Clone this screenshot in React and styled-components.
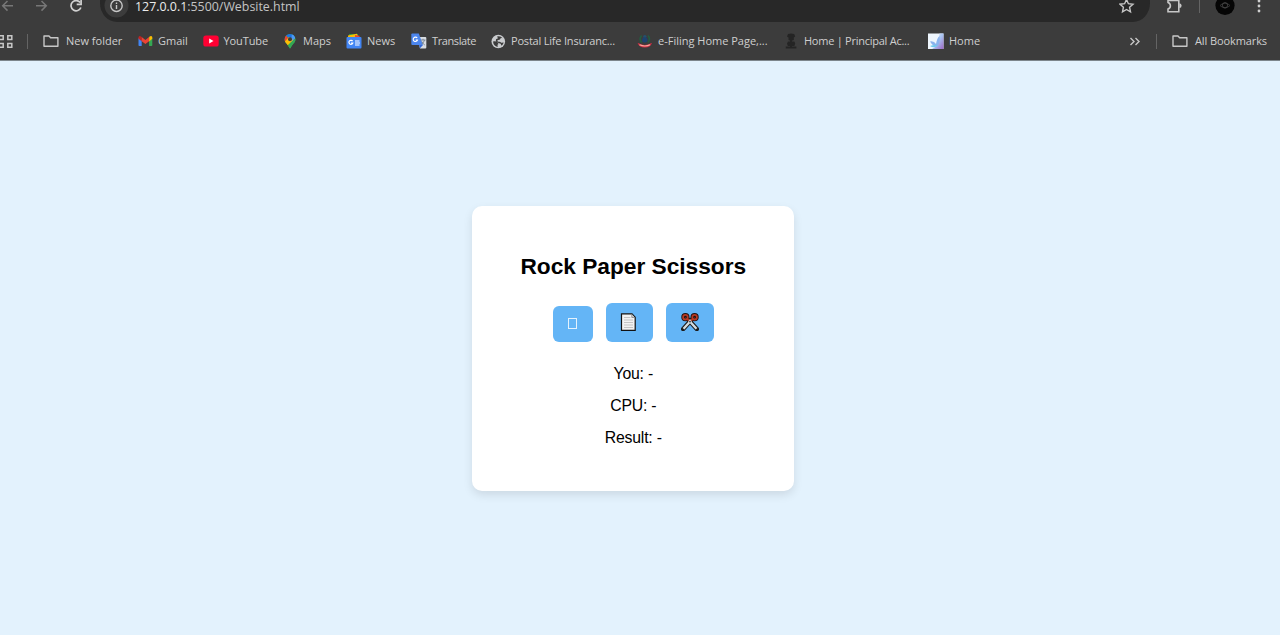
import React from 'react';
import styled, { createGlobalStyle } from 'styled-components';

const GlobalStyle = createGlobalStyle`
  * { box-sizing: border-box; }
  body { margin: 0; background: #e3f2fd; overflow: hidden; }
`;

const Page = styled.div`
  display: flex;
  flex-direction: column;
  width: 1280px;
  height: 635px;
  overflow: hidden;
  background: #e3f2fd;
`;

const Chrome = styled.header`
  flex: none;
  height: 61px;
  background: #3c3c3c;
  border-bottom: 1px solid #7d868c;
  color: #cfcfcf;
  font-family: 'Open Sans', 'Noto Sans', sans-serif;
`;

const Toolbar = styled.div`
  display: flex;
  align-items: flex-start;
  height: 22px;
  svg { display: block; flex: none; }
`;

const NavButtons = styled.div`
  display: flex;
  width: 100px;
`;

const AddressBar = styled.div`
  display: flex;
  width: 1050px;
  height: 22px;
  padding-left: 3px;
  background: #282828;
  border-radius: 0 0 17px 17px / 0 0 19px 19px;
`;

const Url = styled.span`
  flex: 1;
  margin-left: 6px;
  font-size: 12.4px;
  line-height: 13px;
  white-space: nowrap;
  color: #c4c4c4;
  b { font-weight: 400; color: #ececec; }
`;

const ToolbarEnd = styled.div`
  display: flex;
  flex: 1;
  padding-left: 15px;
`;

const Bookmarks = styled.nav`
  display: flex;
  align-items: center;
  height: 38px;
`;

const Bookmark = styled.div`
  display: flex;
  align-items: center;
  flex: none;
  width: ${(p) => p.$width}px;
  font-size: 11px;
  line-height: 16px;
  letter-spacing: ${(p) => p.$tracking || 0}px;
  white-space: nowrap;
  svg { display: block; flex: none; margin-right: ${(p) => p.$gap ?? 5}px; }
`;

const Apps = styled.div`
  width: 27px;
  svg { display: block; }
`;

const Divider = styled.i`
  flex: none;
  width: 1px;
  height: ${(p) => p.$height || 15}px;
  margin-right: ${(p) => p.$after || 15}px;
  background: #646464;
`;

const Overflow = styled.div`
  width: 27px;
  margin-left: auto;
  svg { display: block; }
`;

const Main = styled.main`
  display: flex;
  flex: 1;
  align-items: center;
  justify-content: center;
  padding-right: 13.4px;
`;

const Card = styled.section`
  display: flex;
  flex-direction: column;
  align-items: center;
  width: 322px;
  height: 285px;
  padding-top: 46px;
  border-radius: 10px;
  background: #fff;
  box-shadow: 0 4px 10px rgba(0, 0, 0, 0.1);
  font-family: 'Liberation Sans', Arial, sans-serif;
  color: #000;
`;

const Title = styled.h2`
  margin: 0 0 23px;
  font-size: 22.7px;
  line-height: 28px;
  white-space: nowrap;
`;

const Choices = styled.div`
  display: flex;
  align-items: flex-end;
  gap: 13px;
  margin-bottom: 23px;
`;

const Choice = styled.button`
  display: flex;
  align-items: center;
  justify-content: center;
  width: ${(p) => p.$width}px;
  height: ${(p) => p.$height}px;
  padding: 0;
  border: 0;
  border-radius: 6px;
  background: #64b5f6;
  svg { display: block; }
`;

const EmptyGlyph = styled.span`
  width: 9px;
  height: 11px;
  margin: 0 1px 1px 0;
  border: 1px solid #e4f2fd;
`;

const Score = styled.p`
  margin: 0 0 14px;
  font-size: 15.8px;
  line-height: 18px;
  letter-spacing: -0.2px;
`;

const line = { fill: 'none', stroke: '#c7c7c7', strokeWidth: 1.4 };

const AppsIcon = () => (
  <svg width="14" height="15" viewBox="0 0 14 15" {...line} strokeWidth="1.5">
    <path d="M0 1.8h3.2v3.6H0M0 9.4h3.2v3.8H0M7.8 1.800h4v3.600h-4zM7.800 9.400h4v3.800h-4z" />
  </svg>
);

const FolderIcon = () => (
  <svg width="16" height="14" viewBox="0 0 16 14" {...line} strokeLinejoin="round">
    <path d="M1 2h5l1.6 1.8h7.3v8.4H1z" />
  </svg>
);

const GmailIcon = () => (
  <svg width="15" height="12" viewBox="0 0 15 12">
    <path d="M.5 3v7.3q0 .8.8.8h2.4V5z" fill="#4285f4" />
    <path d="M14.3 3v7.3q0 .8-.8.8h-2.4V5z" fill="#34a853" />
    <path d="M11.1 2l1-.8q2.2-.8 2.2 1.4v1.2l-3.2 2.6z" fill="#fbbc04" />
    <path d="M.5 3.7V2.6Q.7.2 3 1.4l.7.6v4.3z" fill="#c5221f" />
    <path d="M3.7 2l3.7 2.9L11.1 2v4.3L7.4 9.1 3.7 6.3z" fill="#ea4335" />
  </svg>
);

const YouTubeIcon = () => (
  <svg width="16" height="12" viewBox="0 0 16 12">
    <rect x=".3" y=".5" width="15.4" height="11" rx="2.6" fill="#ff0033" />
    <path d="M6.2 3.6v4.8L10.5 6z" fill="#fff" />
  </svg>
);

const MapsIcon = () => (
  <svg width="14" height="16" viewBox="0 0 14 16">
    <defs>
      <clipPath id="pin">
        <path d="M7 1a5.4 5.4 0 0 1 5.4 5.4c0 3.4-3.5 4.6-4.5 8.2-.3 1.2-1.5 1.2-1.8 0C5.1 11 1.6 9.8 1.6 6.4A5.4 5.4 0 0 1 7 1z" />
      </clipPath>
    </defs>
    <g clipPath="url(#pin)">
      <path d="M0 0h14v16H0z" fill="#34a853" />
      <path d="M7 6L0 0h14z" fill="#1a73e8" />
      <path d="M9 0h5v4L8 9z" fill="#4c98f2" />
      <path d="M0 1l3.5 1.7L6.200 7 0 10z" fill="#ea4335" />
      <path d="M1 9.5L6 4l4 3-6 6z" fill="#fbbc04" />
      <path d="M14 4L4.5 14 10 16l4-6z" fill="#34a853" />
    </g>
    <circle cx="7" cy="6.3" r="2" fill="#3c3c3c" />
  </svg>
);

const NewsIcon = () => (
  <svg width="16" height="16" viewBox="0 0 16 16">
    <path d="M3 1h9v5H3z" fill="#2a9b4b" />
    <path d="M2 2.5l9-1.8 1 4H2z" fill="#fbbc04" />
    <path d="M9 2l4.5.8V5H9z" fill="#ea4335" />
    <rect x=".5" y="4" width="15" height="11.5" rx="1" fill="#4285f4" />
    <path d="M6.600 8.200A2 2 0 1 0 6.800 10H5M9 8h4.500M9 10h5M9 12h4.500" fill="none" stroke="#fff" strokeWidth="1.2" />
  </svg>
);

const TranslateIcon = () => (
  <svg width="16" height="16" viewBox="0 0 16 16">
    <path d="M6 4h8.3q1 0 1 1v9.4q0 1-1 1H9z" fill="#d9dde2" />
    <path d="M1.3.6h6.5L12 12H1.3q-1 0-1-1V1.6q0-1 1-1z" fill="#4c86ee" />
    <path d="M8 12h4l-3 3.3z" fill="#3367d6" />
    <path d="M6.2 5A2.2 2.2 0 1 0 6.5 7H4.7" fill="none" stroke="#fff" strokeWidth="1.1" />
    <path d="M9.5 7h5M12 5.8V7M13.5 7q-.7 3-3 4.300M10.800 8.500q1.200 2.500 3 3.500" fill="none" stroke="#74808f" strokeWidth=".9" />
  </svg>
);

const GlobeIcon = () => (
  <svg width="15" height="15" viewBox="0 0 15 15">
    <circle cx="7.3" cy="7.5" r="6.8" fill="#c9cbce" />
    <path d="M2 7.500q2.600-.6 4.500.8l1 1.700-1 .8.200 2.100Q2.600 12.400 2 7.500z" fill="#3c3c3c" />
    <path d="M6 2.500q3.600-1 5.500 1.700-2.200-.4-2.500 1.300l-2.500.700q-.6 1.200 1 1.600 1.800-.6 2.700.9l2.500-.3q-.4 2-2.200 3.300l-.8-1.900-2.200-.8-2.700-1.500.2-2.200 2-1z" fill="#3c3c3c" />
  </svg>
);

const FilingIcon = () => (
  <svg width="16" height="16" viewBox="0 0 16 16">
    <path d="M4.6 2.500Q1.500 6 4.700 9.500M11 2.500q3 3.500-.2 7" fill="none" stroke="#235c40" strokeWidth="1.6" />
    <circle cx="7.800" cy="3.600" r="1.700" fill="#24506f" />
    <ellipse cx="7.800" cy="6.900" rx="2.700" ry="2.700" fill="#1d4270" />
    <path d="M.6 10q2 .3 3.200 1.200 4 1.500 8 0Q13 10.300 15 10q-1.700 4.600-7.200 4.600T.6 10z" fill="#d62e45" />
    <path d="M2.500 11.800q5.300 2.400 10.600 0" fill="none" stroke="#f3a99c" strokeWidth="1.200" />
  </svg>
);

const EmblemIcon = () => (
  <svg width="14" height="16" viewBox="0 0 14 16" fill="#242424">
    <path d="M4 1l3-.6L10.2 1l1 2.5-1.4 1V7L7 8 4.5 7V4.5L3 3.5z" />
    <path d="M4 8.500h6.400l.8 2-.8 2.500H3.800L3 10.500zM1.800 13.500h10.600v2H1.800zM6 7h2v7H6z" />
  </svg>
);

const FeatherIcon = () => (
  <svg width="16" height="16" viewBox="0 0 16 16">
    <defs>
      <linearGradient id="petal" x1="0" y1="0" x2="1" y2="1">
        <stop offset="0" stopColor="#f7fbff" />
        <stop offset=".5" stopColor="#a9c4f2" />
        <stop offset="1" stopColor="#9c66c5" />
      </linearGradient>
    </defs>
    <path d="M0 .5h15.500V16H0z" fill="#eef6fd" />
    <path d="M15.500.5V16H4q7-3 7.500-15.500z" fill="url(#petal)" />
    <path d="M2 8.500q4-.8 6 2.500 1-6 3.500-8 .8 6-1.500 9.500-4 2.500-8-4z" fill="#8ab3ee" />
    <path d="M2 13q4.500-1.500 8-.5-4 3.300-8 .5z" fill="#70c9ee" />
  </svg>
);

const PaperIcon = () => (
  <svg width="18" height="18" viewBox="0 0 18 18">
    <path d="M1.500.8h10.500L15.200 4.300v13H1.500z" fill="#f2f2f2" stroke="#111" strokeWidth="1.2" />
    <path d="M11.800 1.300v3.200h3" fill="#cfcfcf" stroke="#777" strokeWidth=".7" />
    <path d="M4 4.500h6.500M4 7h9M4 9.500h9M4 12h9M4 14.500h9" stroke="#c4c4c4" />
  </svg>
);

const ScissorsIcon = () => (
  <svg width="18" height="18" viewBox="0 0 18 18" fill="none">
    <path d="M7.200 6.500L15.800 16M10.800 6.500L2.200 16" stroke="#1c1c1c" strokeWidth="4.400" strokeLinecap="round" />
    <path d="M7.500 7l8 8.800M10.500 7l-8 8.800" stroke="#d3dce0" strokeWidth="2.300" />
    <g stroke="#20100e" strokeWidth="3.800">
      <circle cx="4.400" cy="4.200" r="2.200" />
      <circle cx="13.600" cy="4.200" r="2.200" />
    </g>
    <g stroke="#b83a26" strokeWidth="1.800">
      <path d="M6 5.700l2 1.800M12 5.700l-2 1.800" />
      <circle cx="4.400" cy="4.200" r="2.300" />
      <circle cx="13.600" cy="4.200" r="2.300" />
    </g>
    <circle cx="9" cy="8.600" r=".9" fill="#333" />
  </svg>
);

const NavIcons = () => (
  <svg width="100" height="22" viewBox="0 0 100 22" fill="none" strokeWidth="1.5">
    <path d="M13 5.8H3M7.5 1L2.7 5.800l4.800 4.800M36 5.800h10M41.500 1l4.800 4.800-4.800 4.800" stroke="#777" />
    <path d="M80.2 2.600A5.100 5.100 0 1 0 80.900 7.500" stroke="#d0d0d0" strokeWidth="1.7" />
    <path d="M81.100 0v4.300h-4.400" stroke="#d0d0d0" strokeWidth="1.7" />
  </svg>
);

const SiteInfo = () => (
  <svg width="26" height="22" viewBox="0 0 26 22">
    <circle cx="13.5" cy="5.5" r="12" fill="#3c3c3c" />
    <circle cx="13.5" cy="5.8" r="5.7" {...line} />
    <path d="M13.500 5v4M13.500 2.500V4" {...line} />
  </svg>
);

const StarIcon = () => (
  <svg width="31" height="22" viewBox="0 0 31 22" {...line}>
    <path d="M7.500-.5l1.900 4.200 4.600.5-3.400 3.100.9 4.500-4-2.300-4 2.300.9-4.500L1 4.200l4.600-.5z" />
  </svg>
);

const ExtensionIcon = () => (
  <svg width="34" height="22" viewBox="0 0 34 22" {...line} strokeWidth="1.6">
    <path d="M3 .5v1.900q2.400.8 2.400 3.300T3 9v2.800h10.800V.5z" />
    <path d="M14.300 3.300q2.300.2 2.300 2.400t-2.300 2.400z" fill="#c7c7c7" stroke="none" />
  </svg>
);

const ProfileIcon = () => (
  <svg width="20" height="22" viewBox="0 0 20 22" fill="none">
    <circle cx="10" cy="5.5" r="9.6" fill="#050505" />
    <path d="M5 5.500q5-5 10 0-5 5-10 0z" stroke="#333" />
    <circle cx="10" cy="5.300" r="2.600" stroke="#444" />
  </svg>
);

const MenuIcon = () => (
  <svg width="44" height="22" viewBox="0 0 44 22" fill="#d0d0d0">
    <circle cx="24" cy="1" r="1.400" />
    <circle cx="24" cy="6" r="1.400" />
    <circle cx="24" cy="11" r="1.400" />
  </svg>
);

const bookmarks = [
  { label: 'New folder', icon: FolderIcon, width: 95, gap: 7 },
  { label: 'Gmail', icon: GmailIcon, width: 64.5 },
  { label: 'YouTube', icon: YouTubeIcon, width: 80.5, tracking: -0.1 },
  { label: 'Maps', icon: MapsIcon, width: 63, gap: 6 },
  { label: 'News', icon: NewsIcon, width: 65 },
  { label: 'Translate', icon: TranslateIcon, width: 80, tracking: -0.4 },
  { label: 'Postal Life Insuranc...', icon: GlobeIcon, width: 146, tracking: -0.2 },
  { label: 'e-Filing Home Page,...', icon: FilingIcon, width: 147 },
  { label: 'Home | Principal Ac...', icon: EmblemIcon, width: 144, gap: 6, tracking: -0.25 },
  { label: 'Home', icon: FeatherIcon, width: 60 },
];

export default function App() {
  return (
    <Page>
      <GlobalStyle />
      <Chrome>
        <Toolbar>
          <NavButtons><NavIcons /></NavButtons>
          <AddressBar>
            <SiteInfo />
            <Url><b>127.0.0.1</b>:5500/Website.html</Url>
            <StarIcon />
          </AddressBar>
          <ToolbarEnd>
            <ExtensionIcon />
            <Divider $height={13} $after={15} />
            <ProfileIcon />
            <MenuIcon />
          </ToolbarEnd>
        </Toolbar>
        <Bookmarks>
          <Apps><AppsIcon /></Apps>
          <Divider />
          {bookmarks.map(({ label, icon: Icon, width, gap, tracking }) => (
            <Bookmark key={label} $width={width} $gap={gap} $tracking={tracking}>
              <Icon />
              {label}
            </Bookmark>
          ))}
          <Overflow>
            <svg width="12" height="11" viewBox="0 0 12 11" {...line}>
              <path d="M1.500 2l3.500 3.500L1.500 9M6.500 2L10 5.500 6.500 9" />
            </svg>
          </Overflow>
          <Divider />
          <Bookmark $width={108} $gap={7} $tracking={-0.1}>
            <FolderIcon />
            All Bookmarks
          </Bookmark>
        </Bookmarks>
      </Chrome>
      <Main>
        <Card>
          <Title>Rock Paper Scissors</Title>
          <Choices>
            <Choice $width={40} $height={36} aria-label="Rock"><EmptyGlyph /></Choice>
            <Choice $width={47} $height={39} aria-label="Paper"><PaperIcon /></Choice>
            <Choice $width={48} $height={39} aria-label="Scissors"><ScissorsIcon /></Choice>
          </Choices>
          <Score>You: -</Score>
          <Score>CPU: -</Score>
          <Score>Result: -</Score>
        </Card>
      </Main>
    </Page>
  );
}
